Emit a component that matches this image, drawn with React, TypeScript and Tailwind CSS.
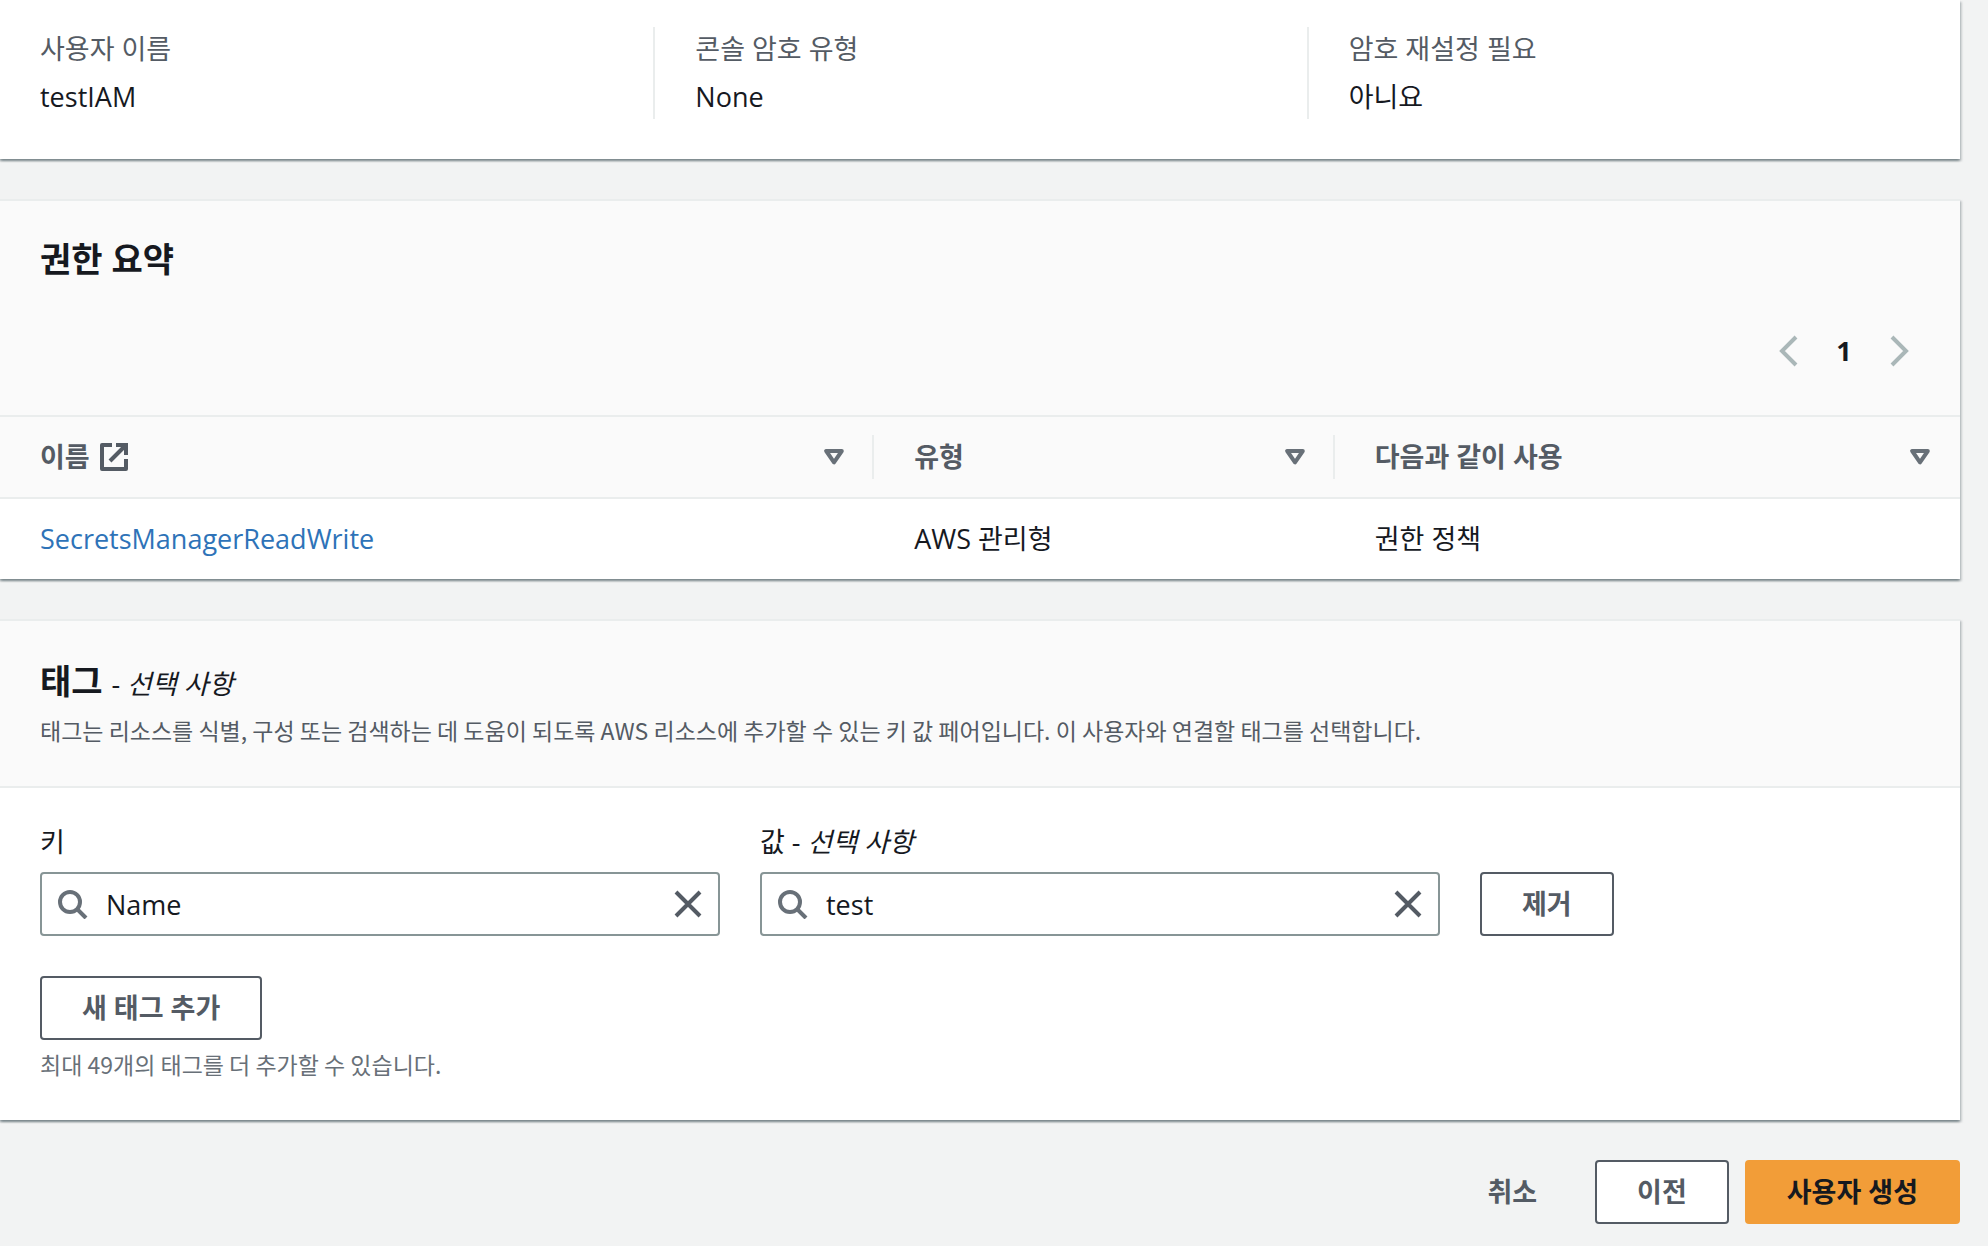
import { useState, type ReactNode } from 'react';
import clsx from 'clsx';

const CARD_SHADOW =
  'shadow-[0_2px_2px_0_rgba(0,28,36,0.3),2px_2px_2px_0_rgba(0,28,36,0.15),-2px_2px_2px_0_rgba(0,28,36,0.15)]';

const DETAILS = [
  { label: '사용자 이름', value: 'testIAM' },
  { label: '콘솔 암호 유형', value: 'None' },
  { label: '암호 재설정 필요', value: '아니요' },
];

const POLICIES = [{ name: 'SecretsManagerReadWrite', type: 'AWS 관리형', usedAs: '권한 정책' }];

function SearchIcon() {
  return (
    <svg className="size-[30px] shrink-0 text-[#687078]" viewBox="0 0 30 30" fill="none" stroke="currentColor" strokeWidth="4">
      <circle cx="12" cy="13" r="10" />
      <path d="M19 20l9 9" />
    </svg>
  );
}

function CloseIcon() {
  return (
    <svg className="size-7" viewBox="0 0 28 28" fill="none" stroke="currentColor" strokeWidth="4">
      <path d="M2 2l24 24M26 2L2 26" />
    </svg>
  );
}

function ExternalIcon() {
  return (
    <svg className="size-7 shrink-0" viewBox="0 0 28 28" fill="none" stroke="currentColor" strokeWidth="4" strokeLinejoin="round">
      <path d="M12 2H2v24h24V16" />
      <path d="M16 2h10v10" strokeLinejoin="miter" />
      <path d="M10 18L25 3" />
    </svg>
  );
}

function SortIcon() {
  return (
    <svg className="h-4 w-5 text-[#687078]" viewBox="0 0 20 16" fill="none" stroke="currentColor" strokeWidth="4" strokeLinejoin="round">
      <path d="M2.2 2h15.6L10 13.4z" />
    </svg>
  );
}

function Chevron({ direction }: { direction: 'left' | 'right' }) {
  return (
    <svg className="h-8 w-5" viewBox="0 0 20 32" fill="none" stroke="currentColor" strokeWidth="4">
      <path d={direction === 'left' ? 'M18 2L4 16l14 14' : 'M2 2l14 14L2 30'} />
    </svg>
  );
}

function Card({ children, className }: { children: ReactNode; className?: string }) {
  return (
    <section className={clsx('border-t-2 border-[#eaeded] bg-white', CARD_SHADOW, className)}>
      {children}
    </section>
  );
}

interface ButtonProps {
  children: ReactNode;
  variant?: 'normal' | 'primary' | 'link';
}

function Button({ children, variant = 'normal' }: ButtonProps) {
  return (
    <button
      type="button"
      className={clsx(
        'h-16 whitespace-nowrap rounded-sm border-2 px-10 font-bold leading-10',
        variant === 'normal' && 'border-[#545b64] bg-white text-[#545b64]',
        variant === 'primary' && 'border-[#f29d38] bg-[#f29d38] text-[#16191f]',
        variant === 'link' && 'border-transparent text-[#545b64]'
      )}
    >
      {children}
    </button>
  );
}

interface SearchFieldProps {
  id: string;
  label: ReactNode;
  initial: string;
}

function SearchField({ id, label, initial }: SearchFieldProps) {
  const [value, setValue] = useState(initial);

  return (
    <div className="col-span-3">
      <label htmlFor={id} className="block leading-11">
        {label}
      </label>
      <div className="mt-2 flex h-16 items-center rounded-sm border-2 border-[#879596] bg-white px-4">
        <SearchIcon />
        <input
          id={id}
          type="text"
          className="ml-[18px] h-full min-w-0 flex-1 outline-none"
          value={value}
          onChange={(e) => setValue(e.target.value)}
        />
        <button type="button" aria-label="지우기" className="text-[#545b64]" onClick={() => setValue('')}>
          <CloseIcon />
        </button>
      </div>
    </div>
  );
}

function ColumnHeader({ children, className, last }: { children: ReactNode; className?: string; last?: boolean }) {
  return (
    <th scope="col" className={clsx('h-[82px] p-0 text-left font-bold', className)}>
      <div
        className={clsx(
          'flex h-11 items-center justify-between pl-10',
          last ? 'pr-[30px]' : 'border-r-2 border-[#eaeded] pr-7'
        )}
      >
        <span className="flex items-center gap-2.5">{children}</span>
        <button type="button" aria-label="정렬">
          <SortIcon />
        </button>
      </div>
    </th>
  );
}

export default function App() {
  return (
    <div className="min-h-screen bg-[#f2f3f3] pr-7 pb-5 font-['Open_Sans','Noto_Sans_CJK_KR',sans-serif] text-[27px] text-[#16191f]">
      {/* User details */}
      <section className={clsx('bg-white pt-[27px] pb-10', CARD_SHADOW)}>
        <dl className="grid grid-cols-3">
          {DETAILS.map((item, i) => (
            <div key={item.label} className={clsx('px-10', i > 0 && 'border-l-2 border-[#eaeded]')}>
              <dt className="leading-11 text-[#545b64]">{item.label}</dt>
              <dd className="mt-1 leading-11">{item.value}</dd>
            </div>
          ))}
        </dl>
      </section>

      {/* Permissions summary */}
      <Card className="mt-10">
        <header className="bg-[#fafafa] pt-9 pb-8">
          <h2 className="px-10 text-[34px] font-bold leading-11">권한 요약</h2>
          <nav aria-label="페이지" className="mt-[38px] flex h-16 items-center justify-end pr-8">
            <button type="button" aria-label="이전 페이지" className="flex w-14 justify-center text-[#aab7b8]" disabled>
              <Chevron direction="left" />
            </button>
            <button type="button" aria-current="page" className="w-14 font-bold">
              1
            </button>
            <button type="button" aria-label="다음 페이지" className="flex w-14 justify-center text-[#aab7b8]" disabled>
              <Chevron direction="right" />
            </button>
          </nav>
        </header>
        <table className="w-full table-fixed border-collapse">
          <thead className="bg-[#fafafa] text-[#545b64]">
            <tr className="border-y-2 border-[#eaeded]">
              <ColumnHeader className="w-[44.6%]">
                이름 <ExternalIcon />
              </ColumnHeader>
              <ColumnHeader className="w-[23.5%]">유형</ColumnHeader>
              <ColumnHeader last>다음과 같이 사용</ColumnHeader>
            </tr>
          </thead>
          <tbody>
            {POLICIES.map((policy) => (
              <tr key={policy.name}>
                <td className="h-[81px] px-10 py-0">
                  <a href="#policy" className="text-[#2e73b8]">
                    {policy.name}
                  </a>
                </td>
                <td className="px-10 py-0">{policy.type}</td>
                <td className="px-10 py-0">{policy.usedAs}</td>
              </tr>
            ))}
          </tbody>
        </table>
      </Card>

      {/* Tags */}
      <Card className="mt-10">
        <header className="border-b-2 border-[#eaeded] bg-[#fafafa] px-10 pt-[38px] pb-9">
          <h2 className="text-[34px] font-bold leading-11">
            태그 <span className="text-[27px] font-normal">- <i>선택 사항</i></span>
          </h2>
          <p className="mt-1 font-['Noto_Sans_CJK_KR',sans-serif] text-[23px] leading-10 text-[#545b64]">
            태그는 리소스를 식별, 구성 또는 검색하는 데 도움이 되도록 AWS 리소스에 추가할 수 있는 키 값 페어입니다. 이 사용자와 연결할 태그를 선택합니다.
          </p>
        </header>
        <div className="px-10 pt-8 pb-9">
          <div className="grid grid-cols-8 items-end gap-x-10">
            <SearchField id="tag-key" label="키" initial="Name" />
            <SearchField id="tag-value" label={<>값 - <i>선택 사항</i></>} initial="test" />
            <div className="col-span-2">
              <Button>제거</Button>
            </div>
          </div>
          <div className="mt-10 flex">
            <Button>새 태그 추가</Button>
          </div>
          <p className="mt-1 font-['Noto_Sans_CJK_KR',sans-serif] text-[23px] leading-10 text-[#687078]">
            최대 49개의 태그를 더 추가할 수 있습니다.
          </p>
        </div>
      </Card>

      {/* Wizard actions */}
      <footer className="mt-10 flex justify-end gap-4">
        <Button variant="link">취소</Button>
        <Button>이전</Button>
        <Button variant="primary">사용자 생성</Button>
      </footer>
    </div>
  );
}
